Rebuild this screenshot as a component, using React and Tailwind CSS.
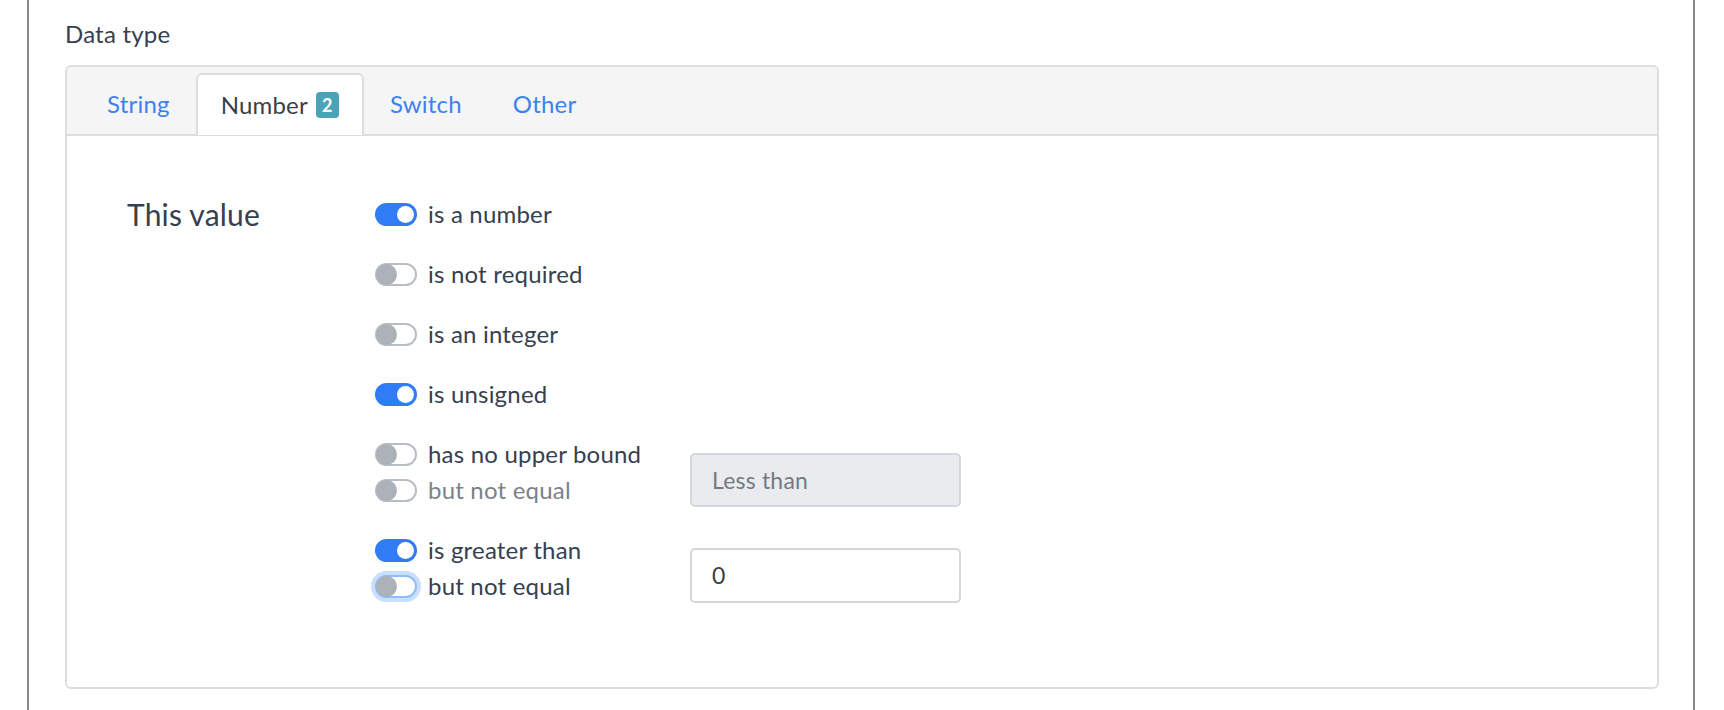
import React from 'react';

const rows = [
  { on: true, label: 'is a number' },
  { on: false, label: 'is not required' },
  { on: false, label: 'is an integer' },
  { on: true, label: 'is unsigned' },
];

// bootstrap-ish custom switch
const Toggle = ({ on, focus }) => (
  <span
    className={
      on
        ? 'relative inline-block w-[42px] h-[23px] shrink-0 rounded-full border-2 border-[#2f7cf6] bg-[#2f7cf6]'
        : focus
        ? 'relative inline-block w-[42px] h-[23px] shrink-0 rounded-full border-2 border-[#8ebcf8] bg-white shadow-[0_0_0_4px_#cadefd]'
        : 'relative inline-block w-[42px] h-[23px] shrink-0 rounded-full border-2 border-[#b9bec4] bg-white'
    }
  >
    <span
      className={
        on
          ? 'absolute right-[1px] top-[1px] w-[17px] h-[17px] rounded-full bg-white'
          : 'absolute left-[-1px] top-[-1px] w-[21px] h-[21px] rounded-full bg-[#adb2b8]'
      }
    />
  </span>
);

const Option = ({ on, focus, label, muted, h = 'h-[60px]' }) => (
  <div className={`flex items-center gap-[11px] ${h}`}>
    <Toggle on={on} focus={focus} />
    <span className={muted ? 'text-[#7b8189]' : 'text-[#36404f]'}>{label}</span>
  </div>
);

const Tab = ({ label, active, badge }) =>
  active ? (
    <div className="flex items-center gap-[8px] h-[62px] px-[23px] -mb-[1px] bg-white border-2 border-b-0 border-[#dedede] rounded-t-[6px] text-[#3a3f47]">
      {label}
      {badge && (
        <span className="inline-flex items-center justify-center w-[23px] h-[26px] rounded-[4px] bg-[#4aa3b6] text-white text-[18px] font-bold">
          {badge}
        </span>
      )}
    </div>
  ) : (
    <div className="flex items-center h-[60px] px-[25px] text-[#3b82f0]">{label}</div>
  );

export default function App() {
  return (
    <div className="h-[710px] bg-white pl-[27px] pr-[29px] font-['Lato',sans-serif] tracking-[0.2px] overflow-hidden">
      <div className="h-full border-x-2 border-[#8a8a8a] pl-[36px] pr-[34px]">
        <div className="pt-[20px] mb-[17px] text-[24px] leading-[28px] text-[#36404f]">Data type</div>

        <div className="border-2 border-[#dedede] rounded-[6px] overflow-hidden">
          <div className="flex items-end gap-[1px] h-[69px] pl-[15px] bg-[#f5f5f5] border-b-2 border-[#dedede] text-[24px]">
            <Tab label="String" />
            <Tab label="Number" badge="2" active />
            <Tab label="Switch" />
            <Tab label="Other" />
          </div>

          <div className="flex pt-[48px] pb-[83px] pl-[60px]">
            <div className="w-[248px] h-[60px] flex items-center text-[30px] text-[#36404f]">This value</div>

            <div className="flex flex-col text-[24px]">
              {rows.map((r) => (
                <Option key={r.label} on={r.on} label={r.label} />
              ))}

              <div className="flex items-end mt-[12px]">
                <div className="w-[315px]">
                  <Option on={false} label="has no upper bound" h="h-[36px]" />
                  <Option on={false} label="but not equal" muted h="h-[36px]" />
                </div>
                <div className="w-[271px] h-[54px] mb-[1px] flex items-center px-[20px] rounded-[5px] border-2 border-[#d3d6da] bg-[#e9ebee] text-[#737a82] text-[23px]">
                  Less than
                </div>
              </div>

              <div className="flex items-end mt-[24px]">
                <div className="w-[315px]">
                  <Option on label="is greater than" h="h-[36px]" />
                  <Option on={false} focus label="but not equal" h="h-[36px]" />
                </div>
                <div className="w-[271px] h-[55px] mb-[1px] flex items-center px-[20px] rounded-[5px] border-2 border-[#d3d6da] bg-white text-[#3a3f47] text-[23px]">
                  0
                </div>
              </div>
            </div>
          </div>
        </div>
      </div>
    </div>
  );
}
